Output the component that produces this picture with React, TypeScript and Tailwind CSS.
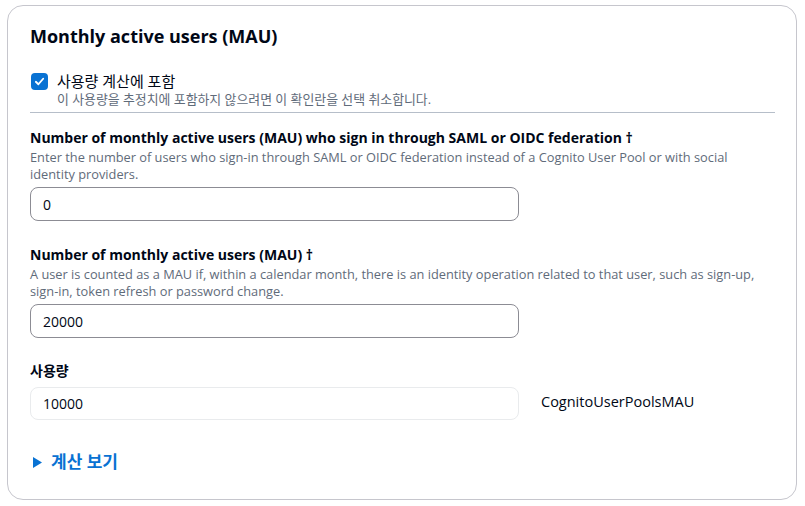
export default function App() {
  return (
    <div className="w-[805px] h-[506px] bg-white pt-[5px] pl-[7px] pr-[8px]" style={{ fontFamily: '"Open Sans", "Noto Sans CJK KR", sans-serif' }}>
      <div className="h-[495px] rounded-[16px] border border-[#c6c6cd] pl-[22px] pr-[21px] pt-[17px] text-[#000716]">
        {/* Title */}
        <h2 className="text-[18px] font-bold leading-[26px]">Monthly active users (MAU)</h2>

        {/* Checkbox */}
        <div className="mt-[22px] flex items-start gap-[9px] pl-[1px]">
          <div className="mt-[2px] flex h-[17px] w-[17px] items-center justify-center rounded-[4px] bg-[#0972d3]">
            <svg width="11" height="11" viewBox="0 0 12 12" fill="none">
              <path d="M2 6.3 L4.8 9 L10 3" stroke="white" strokeWidth="2" strokeLinecap="round" strokeLinejoin="round" />
            </svg>
          </div>
          <div>
            <div className="text-[15px] leading-[20px]">사용량 계산에 포함</div>
            <div className="text-[12.9px] leading-[17px] text-[#5f6b7a]">이 사용량을 추정치에 포함하지 않으려면 이 확인란을 선택 취소합니다.</div>
          </div>
        </div>
        <div className="mt-[4px] h-px bg-[#b6bec9]" />

        {/* SAML / OIDC */}
        <div className="mt-[15px]">
          <div className="text-[14px] font-bold leading-[20px]">Number of monthly active users (MAU) who sign in through SAML or OIDC federation †</div>
          <div className="mt-[1px] text-[12.8px] leading-[17px] text-[#5f6b7a]">
            Enter the number of users who sign-in through SAML or OIDC federation instead of a Cognito User Pool or with social identity providers.
          </div>
          <div className="mt-[4px] flex h-[34px] w-[489px] items-center rounded-[8px] border border-[#8c8c94] px-[12px] text-[14px]">0</div>
        </div>

        {/* MAU */}
        <div className="mt-[24px]">
          <div className="text-[14px] font-bold leading-[20px]">Number of monthly active users (MAU) †</div>
          <div className="mt-[1px] text-[12.8px] leading-[17px] text-[#5f6b7a]">
            A user is counted as a MAU if, within a calendar month, there is an identity operation related to that user, such as sign-up, sign-in, token refresh or password change.
          </div>
          <div className="mt-[4px] flex h-[34px] w-[489px] items-center rounded-[8px] border border-[#8c8c94] px-[12px] text-[14px]">20000</div>
        </div>

        {/* 사용량 */}
        <div className="mt-[23px]">
          <div className="text-[14px] font-bold leading-[20px]">사용량</div>
          <div className="mt-[6px] flex items-center gap-[22px]">
            <div className="flex h-[33px] w-[489px] items-center rounded-[8px] border border-[#e9ebed] px-[12px] text-[14px]">10000</div>
            <div className="-mt-[3px] text-[14.5px]">CognitoUserPoolsMAU</div>
          </div>
        </div>

        {/* 계산 보기 */}
        <div className="mt-[31px] flex items-center gap-[9px] pl-[3px] text-[#0972d3]">
          <svg width="9" height="11" viewBox="0 0 9 11">
            <path d="M0 0 L9 5.5 L0 11 Z" fill="#0972d3" />
          </svg>
          <span className="text-[17px] font-bold leading-[22px]">계산 보기</span>
        </div>
      </div>
    </div>
  );
}
